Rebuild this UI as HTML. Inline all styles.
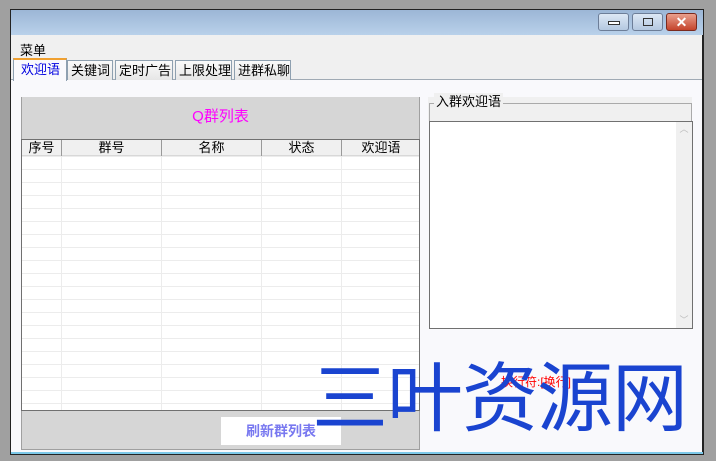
<!DOCTYPE html>
<html><head><meta charset="utf-8"><style>
*{margin:0;padding:0;box-sizing:border-box}
body{width:716px;height:461px;background:#a0a0a0;position:relative;overflow:hidden;font-family:"Liberation Sans","Noto Sans CJK SC",sans-serif;font-size:13px;color:#000}
.abs{position:absolute}
#win{left:10px;top:9px;width:694px;height:446px;background:#f0f0f0;border:1px solid #222;border-right:2px solid #222}
#title{left:11px;top:10px;width:692px;height:25px;background:linear-gradient(#9cb6d6,#b9d1ea)}
.btn{top:13px;height:18px;border:1px solid #6d7e98;border-radius:3px;background:linear-gradient(#dde8f5,#b4c8e0)}
#content{left:11px;top:79px;width:691px;height:373px;background:#f9f9fc;border-top:1px solid #a0aab4}
.tab{top:60px;height:20px;border:1px solid #8ea0b0;border-bottom:none;background:linear-gradient(#fafafa,#e6e6e6);font-size:13px;line-height:19px;padding-left:3px}
</style></head><body>
<div class="abs" id="win"></div>
<div class="abs" id="title"></div>
<div class="abs btn" style="left:598px;width:31px"><div class="abs" style="left:9px;top:7px;width:12px;height:4px;border:1px solid #333;background:#fff"></div></div>
<div class="abs btn" style="left:632px;width:31px"><div class="abs" style="left:10px;top:4px;width:10px;height:8px;border:1px solid #333"></div></div>
<div class="abs btn" style="left:666px;width:31px;background:linear-gradient(#e9a08d,#c4442c);border-color:#7a2a1e;color:#fff;font-weight:bold;text-align:center;line-height:16px;font-size:14px">✕</div>
<div class="abs" style="left:20px;top:40px;font-size:13px">菜单</div>
<div class="abs" id="content"></div>
<div class="abs" style="left:13px;top:58px;width:54px;height:23px;background:#f9f9fc;border:1px solid #8ea0b0;border-top:2px solid #f0a030;border-bottom:none;color:#0000e0;line-height:20px;padding-left:7px">欢迎语</div>
<div class="abs tab" style="left:67px;width:46px">关键词</div>
<div class="abs tab" style="left:115px;width:58px">定时广告</div>
<div class="abs tab" style="left:175px;width:57px">上限处理</div>
<div class="abs tab" style="left:234px;width:57px">进群私聊</div>
<div class="abs" style="left:21px;top:97px;width:399px;height:353px;background:#d6d6d6;border-left:1px solid #a0a0a0;border-bottom:1px solid #a0a0a0;border-right:1px solid #a0a0a0"></div>
<div class="abs" style="left:21px;top:105px;width:399px;text-align:center;color:#ff00ff;font-size:15px">Q群列表</div>
<div class="abs" style="left:21px;top:139px;width:399px;height:272px;background:#fff repeating-linear-gradient(#fff 0 12px,#ececec 12px 13px);background-position:0 4px;border:1px solid #707070"></div>
<div class="abs" style="left:22px;top:140px;width:397px;height:16px;background:#f0f0f0;border-bottom:1px solid #d8d8d8"></div>
<div class="abs" style="left:61px;top:140px;width:1px;height:270px;background:#ececec"></div>
<div class="abs" style="left:161px;top:140px;width:1px;height:270px;background:#ececec"></div>
<div class="abs" style="left:261px;top:140px;width:1px;height:270px;background:#ececec"></div>
<div class="abs" style="left:341px;top:140px;width:1px;height:270px;background:#ececec"></div>
<div class="abs" style="left:61px;top:140px;width:1px;height:16px;background:#999"></div>
<div class="abs" style="left:161px;top:140px;width:1px;height:16px;background:#999"></div>
<div class="abs" style="left:261px;top:140px;width:1px;height:16px;background:#999"></div>
<div class="abs" style="left:341px;top:140px;width:1px;height:16px;background:#999"></div>
<div class="abs" style="left:22px;top:139px;width:39px;text-align:center;line-height:17px">序号</div>
<div class="abs" style="left:62px;top:139px;width:99px;text-align:center;line-height:17px">群号</div>
<div class="abs" style="left:162px;top:139px;width:99px;text-align:center;line-height:17px">名称</div>
<div class="abs" style="left:262px;top:139px;width:79px;text-align:center;line-height:17px">状态</div>
<div class="abs" style="left:342px;top:139px;width:78px;text-align:center;line-height:17px">欢迎语</div>
<div class="abs" style="left:221px;top:417px;width:120px;height:28px;background:#fff;color:#7878f0;font-weight:bold;text-align:center;line-height:28px;font-size:14px">刷新群列表</div>
<div class="abs" style="left:428px;top:97px;width:264px;height:24px;background:#f0f0f0"></div>
<div class="abs" style="left:429px;top:103px;width:263px;height:20px;border:1px solid #aaa;border-bottom:none"></div>
<div class="abs" style="left:434px;top:93px;background:#f0f0f0;padding:0 2px;line-height:18px">入群欢迎语</div>
<div class="abs" style="left:429px;top:121px;width:264px;height:208px;background:#fff;border:1px solid #707070"></div>
<div class="abs" style="left:676px;top:122px;width:16px;height:206px;background:#f0f0f0;color:#bbb;font-size:9px;text-align:center">︿<div style="position:absolute;bottom:2px;width:16px">﹀</div></div>
<div class="abs" style="left:501px;top:373px;color:#f00;font-size:12px">换行符:[换行]</div>
<div class="abs" style="left:312px;top:344px;color:#1a44d0;font-size:76px;line-height:96px;letter-spacing:-1px;font-family:'Noto Sans CJK SC',sans-serif;white-space:nowrap">三叶资源网</div>
<div class="abs" style="left:11px;top:452px;width:692px;height:2px;background:#7cc8e8"></div>
</body></html>
